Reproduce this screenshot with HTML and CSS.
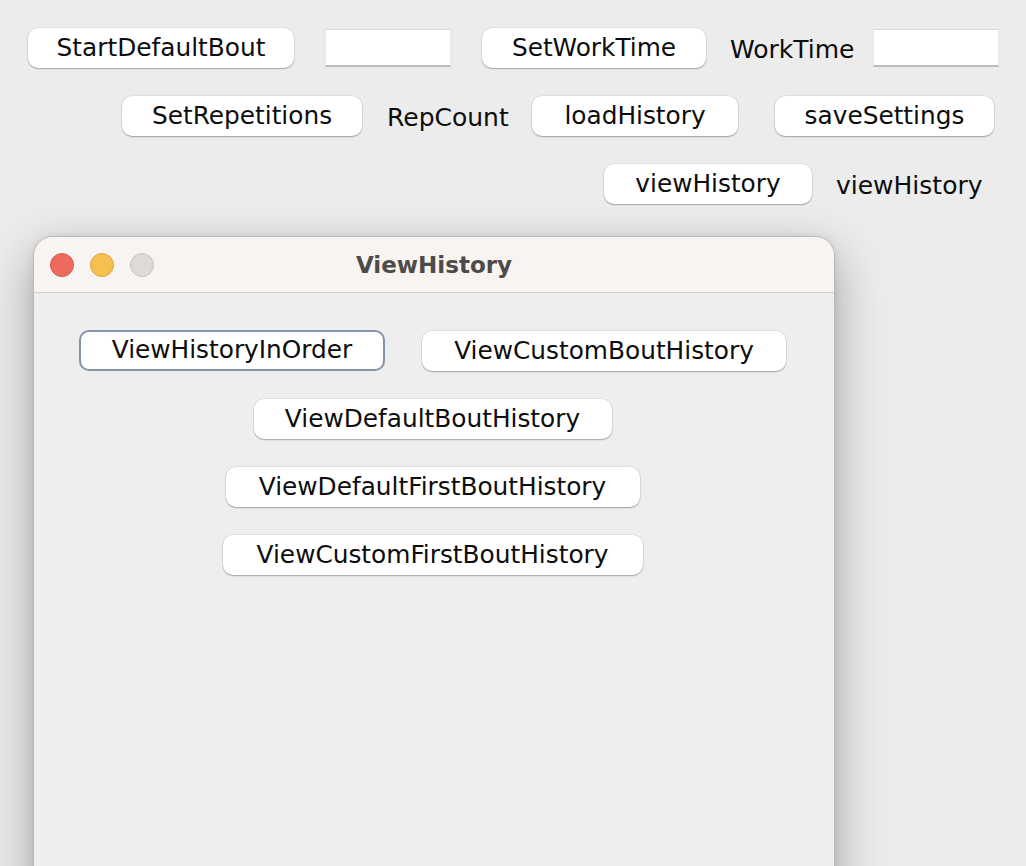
FILE: index.html
```html
<!DOCTYPE html>
<html>
<head>
<meta charset="utf-8">
<title>Bout Timer</title>
<link rel="stylesheet" href="styles.css">
</head>
<body>
<div class="desktop">
  <div class="controls">
    <div class="row row-1">
      <div class="btn w-start">StartDefaultBout</div>
      <div class="field ml-31"></div>
      <div class="btn w-setwork ml-31">SetWorkTime</div>
      <div class="label w-worktime ml-24">WorkTime</div>
      <div class="field ml-17"></div>
    </div>
    <div class="row row-2">
      <div class="btn w-setrep">SetRepetitions</div>
      <div class="label w-repcount ml-25">RepCount</div>
      <div class="btn w-load ml-24">loadHistory</div>
      <div class="btn w-save ml-37">saveSettings</div>
    </div>
    <div class="row row-3">
      <div class="btn w-view">viewHistory</div>
      <div class="label w-viewlabel ml-24">viewHistory</div>
    </div>
  </div>

  <div class="window">
    <div class="titlebar">
      <div class="lights">
        <span class="light red"></span>
        <span class="light yellow"></span>
        <span class="light gray"></span>
      </div>
      <div class="title">ViewHistory</div>
      <div></div>
    </div>
    <div class="content">
      <div class="crow">
        <div class="btn focused w-inorder">ViewHistoryInOrder</div>
        <div class="btn w-custom">ViewCustomBoutHistory</div>
      </div>
      <div class="crow">
        <div class="btn w-default">ViewDefaultBoutHistory</div>
      </div>
      <div class="crow">
        <div class="btn w-deffirst">ViewDefaultFirstBoutHistory</div>
      </div>
      <div class="crow">
        <div class="btn w-custfirst">ViewCustomFirstBoutHistory</div>
      </div>
    </div>
  </div>
</div>
</body>
</html>
```

FILE: styles.css
```css
html, body {
  margin: 0;
  padding: 0;
}
body {
  background: #ececec;
  font-family: "DejaVu Sans", "Liberation Sans", sans-serif;
  color: #111;
  overflow: hidden;
}
.desktop {
  position: relative;
  width: 1026px;
  height: 866px;
  overflow: hidden;
  background: #ececec;
}
.controls {
  display: flex;
  flex-direction: column;
  gap: 28px;
  padding-top: 28px;
}
.row {
  display: flex;
  align-items: center;
  height: 40px;
}
.row-1 { padding-left: 28px; }
.row-2 { padding-left: 122px; }
.row-3 { padding-left: 604px; }

.ml-17 { margin-left: 17px; }
.ml-24 { margin-left: 24px; }
.ml-25 { margin-left: 25px; }
.ml-31 { margin-left: 31px; }
.ml-37 { margin-left: 37px; }

.btn {
  box-sizing: border-box;
  height: 40px;
  line-height: 39px;
  background: #fff;
  border-radius: 10px;
  text-align: center;
  font-size: 24.8px;
  color: #0d0d0d;
  white-space: nowrap;
  box-shadow: 0 0 0 0.5px rgba(0, 0, 0, 0.10), 0 1px 1.5px rgba(0, 0, 0, 0.28);
}
.btn.focused {
  height: 41px;
  line-height: 36px;
  border: 2px solid #8492aa;
  border-radius: 10px;
  box-shadow: none;
}
.label {
  font-size: 25px;
  white-space: nowrap;
  color: #0d0d0d;
  line-height: 40px;
  padding-top: 3px;
}
.field {
  box-sizing: border-box;
  width: 126px;
  height: 38px;
  background: #fff;
  border-top: 1px solid #d8d8d8;
  border-left: 1px solid #e8e8e8;
  border-right: 1px solid #e8e8e8;
  border-bottom: 2px solid #bcbcbc;
}

.w-start { width: 266px; }
.w-setwork { width: 224px; }
.w-worktime { width: 126px; }
.w-setrep { width: 240px; }
.w-repcount { width: 121px; }
.w-load { width: 206px; }
.w-save { width: 219px; }
.w-view { width: 208px; }
.w-viewlabel { width: 148px; }

.window {
  position: absolute;
  left: 33px;
  top: 236px;
  width: 802px;
  height: 720px;
  box-sizing: border-box;
  border: 1px solid #b8b8b8;
  border-radius: 20px 20px 0 0;
  background: #eeeeee;
  box-shadow: 0 18px 50px rgba(0, 0, 0, 0.32), 0 0 8px rgba(0, 0, 0, 0.08);
  overflow: hidden;
}
.titlebar {
  height: 55px;
  background: #f8f4f1;
  border-bottom: 1px solid #d5d1cd;
  display: grid;
  grid-template-columns: 1fr auto 1fr;
  align-items: center;
}
.lights {
  display: flex;
  gap: 16px;
  padding-left: 16px;
  padding-top: 1px;
}
.light {
  box-sizing: border-box;
  width: 24px;
  height: 24px;
  border-radius: 50%;
}
.light.red { background: #ee6a5f; border: 1px solid #d8564b; }
.light.yellow { background: #f6bf4f; border: 1px solid #d9a441; }
.light.gray { background: #dedad6; border: 1px solid #c6c2be; }
.title {
  font-weight: bold;
  font-size: 23px;
  color: #4d4b49;
  padding-top: 1px;
}
.content {
  display: flex;
  flex-direction: column;
  align-items: center;
  gap: 28px;
  padding-top: 37px;
}
.crow {
  display: flex;
  gap: 37px;
  align-items: flex-end;
  margin-left: -3px;
}
.w-inorder { width: 306px; }
.w-custom { width: 364px; }
.w-default { width: 358px; }
.w-deffirst { width: 414px; }
.w-custfirst { width: 420px; }
```
